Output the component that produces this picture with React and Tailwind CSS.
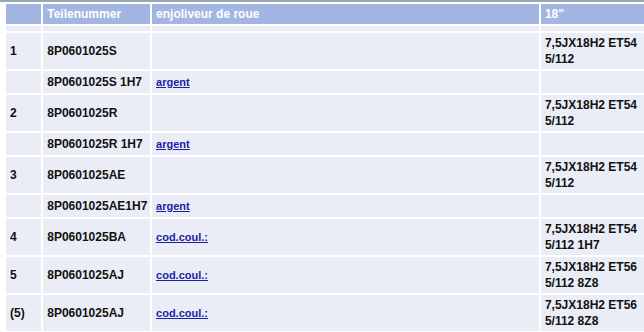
const rows = [
  { n: '1', part: '8P0601025S', tall: true, spec: ['7,5JX18H2 ET54', '5/112'] },
  { n: '', part: '8P0601025S 1H7', link: 'argent' },
  { n: '2', part: '8P0601025R', tall: true, spec: ['7,5JX18H2 ET54', '5/112'] },
  { n: '', part: '8P0601025R 1H7', link: 'argent' },
  { n: '3', part: '8P0601025AE', tall: true, spec: ['7,5JX18H2 ET54', '5/112'] },
  { n: '', part: '8P0601025AE1H7', link: 'argent' },
  { n: '4', part: '8P0601025BA', tall: true, link: 'cod.coul.:', spec: ['7,5JX18H2 ET54', '5/112 1H7'] },
  { n: '5', part: '8P0601025AJ', tall: true, link: 'cod.coul.:', spec: ['7,5JX18H2 ET56', '5/112 8Z8'] },
  { n: '(5)', part: '8P0601025AJ', tall: true, link: 'cod.coul.:', spec: ['7,5JX18H2 ET56', '5/112 8Z8'] },
  { n: '', part: '', tall: true },
];

export default function App() {
  return (
    <div className="w-[644px] h-[332px] overflow-hidden bg-white font-['Liberation_Sans',Arial,sans-serif]">
      <div className="h-[2px] bg-[#9aa8b3]" />
      <div className="pl-1">
        <table className="border-separate border-spacing-[2px] w-[680px] table-fixed text-[12px] font-bold text-[#111]">
          <colgroup>
            <col className="w-[35px]" />
            <col className="w-[106px]" />
            <col className="w-[384px]" />
            <col className="w-[140px]" />
          </colgroup>
          <thead>
            <tr className="h-[20px] bg-[#a3b5e2] text-white text-left">
              <th className="px-1 font-bold"></th>
              <th className="px-1 font-bold">Teilenummer</th>
              <th className="px-1 font-bold">enjoliveur de roue</th>
              <th className="px-1 font-bold">18"</th>
            </tr>
          </thead>
          <tbody>
            <tr className="h-[5px] bg-[#eaedf6]">
              <td /><td /><td /><td />
            </tr>
            {rows.map((r, i) => (
              <tr key={i} className={`${r.tall ? 'h-[36px]' : 'h-[22px]'} bg-[#eaedf6] align-middle`}>
                <td className="px-1">{r.n}</td>
                <td className="px-1 whitespace-nowrap">{r.part}</td>
                <td className="px-1">
                  {r.link && (
                    <a href="#" className="text-[11px] text-[#1d1da8] underline">{r.link}</a>
                  )}
                </td>
                <td className="px-1 leading-[16px] pt-[2px] align-top whitespace-nowrap">
                  {r.spec && (
                    <>
                      <div>{r.spec[0]}</div>
                      <div>{r.spec[1]}</div>
                    </>
                  )}
                </td>
              </tr>
            ))}
          </tbody>
        </table>
      </div>
    </div>
  );
}
